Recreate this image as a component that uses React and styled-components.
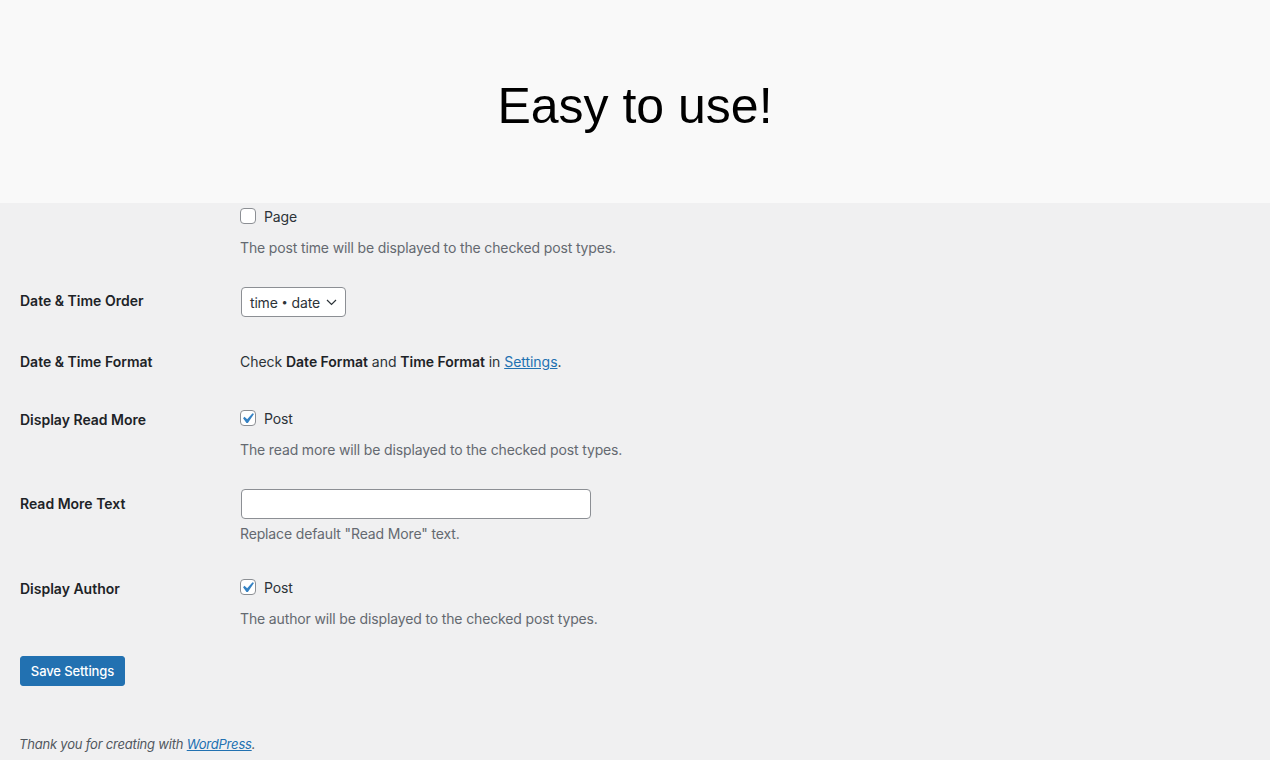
import React from "react";
import styled, { createGlobalStyle } from "styled-components";

const FONT = `Inter, "Liberation Sans", Arial, sans-serif`;

const Global = createGlobalStyle`
  html, body { margin: 0; padding: 0; }
  body {
    background: #f0f0f1;
    font-family: ${FONT};
    color: #1d2327;
    font-size: 14px;
  }
`;

const Page = styled.div`
  width: 1270px;
  min-height: 760px;
  background: #f0f0f1;
`;

const Header = styled.header`
  height: 203px;
  box-sizing: border-box;
  padding-top: 8px;
  background: #f9f9f9;
  display: flex;
  align-items: center;
  justify-content: center;
`;

const Title = styled.h1`
  margin: 0;
  font-family: "Liberation Sans", Arial, sans-serif;
  font-weight: 400;
  font-size: 50px;
  color: #000;
`;

const Form = styled.div`
  padding: 4px 20px 0 20px;
  display: flex;
  flex-direction: column;
`;

const Row = styled.div`
  display: grid;
  grid-template-columns: 220px 1fr;
  align-items: start;
  margin-top: ${(p) => p.$gap || 0}px;
`;

const Label = styled.div`
  font-weight: 600;
  font-size: 14px;
  line-height: 20px;
  color: #1d2327;
  padding-top: ${(p) => p.$offset || 0}px;
`;

const Field = styled.div`
  display: flex;
  flex-direction: column;
  align-items: flex-start;
`;

const CheckLine = styled.label`
  display: flex;
  align-items: center;
  gap: 8px;
  height: 20px;
  margin-top: -1px;
  margin-bottom: 1px;
  font-size: 14px;
  letter-spacing: -0.1px;
  color: #2c3338;
`;

const Box = styled.span`
  position: relative;
  width: 16px;
  height: 16px;
  box-sizing: border-box;
  border: 1px solid #8c8f94;
  border-radius: 4px;
  background: #fff;
  flex-shrink: 0;
`;

const Tick = styled.svg`
  position: absolute;
  left: -4px;
  top: -3px;
  width: 21px;
  height: 21px;
`;

const Desc = styled.p`
  margin: ${(p) => p.$gap || 11}px 0 0 0;
  font-size: 14px;
  line-height: 20px;
  letter-spacing: -0.14px;
  color: #646970;
`;

const Text = styled.p`
  margin: 0;
  font-size: 14px;
  line-height: 20px;
  letter-spacing: -0.04px;
  color: #2c3338;
  b { font-weight: 600; color: #1d2327; }
`;

const Link = styled.a`
  color: #2271b1;
  text-decoration: underline;
`;

const Select = styled.div`
  margin-left: 1px;
  width: 105px;
  height: 30px;
  box-sizing: border-box;
  border: 1px solid #8c8f94;
  border-radius: 4px;
  background: #fff;
  display: flex;
  align-items: center;
  padding: 0 8px 0 8px;
  font-size: 14px;
  letter-spacing: -0.2px;
  color: #2c3338;
  white-space: nowrap;
`;

const Dot = styled.span`
  font-size: 11px;
  margin: 0 4px;
`;

const Arrow = styled.svg`
  margin-left: auto;
  flex-shrink: 0;
`;

const Input = styled.div`
  margin-left: 1px;
  width: 350px;
  height: 30px;
  box-sizing: border-box;
  border: 1px solid #8c8f94;
  border-radius: 4px;
  background: #fff;
`;

const Button = styled.button`
  margin-top: 27px;
  align-self: flex-start;
  height: 30px;
  width: 105px;
  padding: 0;
  border: 1px solid #2271b1;
  border-radius: 3px;
  background: #2271b1;
  color: #fff;
  font-family: ${FONT};
  font-size: 13px;
  font-weight: 500;
  letter-spacing: -0.1px;
  white-space: nowrap;
`;

const Footer = styled.p`
  margin: 49px 0 0 19px;
  font-size: 13px;
  line-height: 18px;
  font-style: italic;
  letter-spacing: -0.2px;
  color: #50575e;
`;

function Checkbox({ checked, children }) {
  return (
    <CheckLine>
      <Box>
        {checked && (
          <Tick viewBox="0 0 20 20">
            <path
              d="M14.83 4.89l1.34.94-5.81 8.38H9.02L5.78 9.67l1.34-1.25 2.57 2.4z"
              fill="#3582c4"
            />
          </Tick>
        )}
      </Box>
      {children}
    </CheckLine>
  );
}

function Chevron() {
  return (
    <Arrow width="11" height="7" viewBox="0 0 11 7">
      <path d="M1 1l4.5 4.5L10 1" fill="none" stroke="#2c3338" strokeWidth="1.2" />
    </Arrow>
  );
}

export default function App() {
  return (
    <Page>
      <Global />
      <Header>
        <Title>Easy to use!</Title>
      </Header>
      <Form>
        <Row>
          <Label />
          <Field>
            <Checkbox>Page</Checkbox>
            <Desc>The post time will be displayed to the checked post types.</Desc>
          </Field>
        </Row>
        <Row $gap={29}>
          <Label $offset={4}>Date &amp; Time Order</Label>
          <Field>
            <Select>
              <span>time</span>
              <Dot>•</Dot>
              <span>date</span>
              <Chevron />
            </Select>
          </Field>
        </Row>
        <Row $gap={35}>
          <Label $offset={-1}>Date &amp; Time Format</Label>
          <Field>
            <Text>
              Check <b>Date Format</b> and <b>Time Format</b> in{" "}
              <Link href="#">Settings</Link>.
            </Text>
          </Field>
        </Row>
        <Row $gap={37}>
          <Label $offset={1}>Display Read More</Label>
          <Field>
            <Checkbox checked>Post</Checkbox>
            <Desc>The read more will be displayed to the checked post types.</Desc>
          </Field>
        </Row>
        <Row $gap={29}>
          <Label $offset={5}>Read More Text</Label>
          <Field>
            <Input />
            <Desc $gap={5}>Replace default "Read More" text.</Desc>
          </Field>
        </Row>
        <Row $gap={34}>
          <Label $offset={1}>Display Author</Label>
          <Field>
            <Checkbox checked>Post</Checkbox>
            <Desc>The author will be displayed to the checked post types.</Desc>
          </Field>
        </Row>
        <Button>Save Settings</Button>
      </Form>
      <Footer>
        Thank you for creating with <Link href="#">WordPress</Link>.
      </Footer>
    </Page>
  );
}
